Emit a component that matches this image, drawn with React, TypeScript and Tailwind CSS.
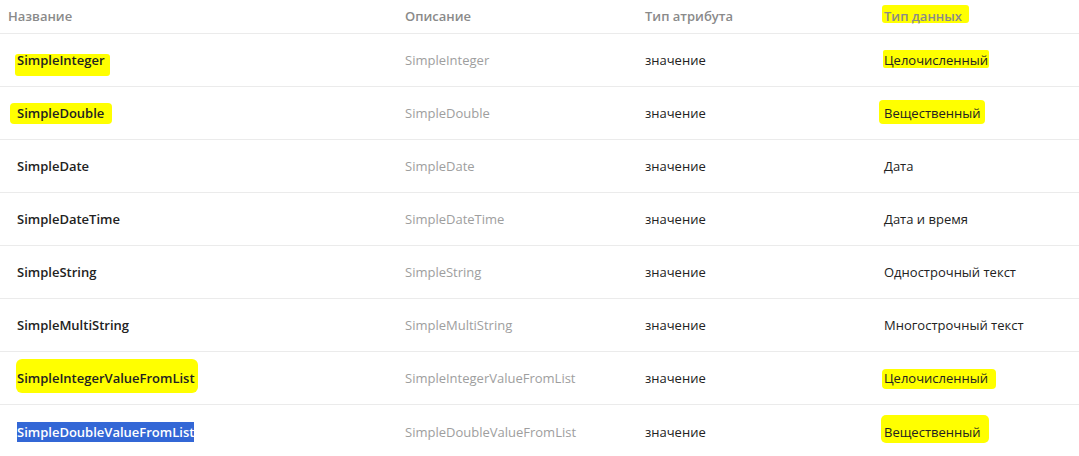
import React from 'react';

type Row = {
  name: string;
  desc: string;
  kind: string;
  type: string;
  nameMark?: string;
  typeMark?: string;
  selected?: boolean;
};

const rows: Row[] = [
  { name: 'SimpleInteger', desc: 'SimpleInteger', kind: 'значение', type: 'Целочисленный', nameMark: '-left-[2px] -right-[5px] top-[3px] -bottom-[5px] rounded-[3px]', typeMark: '-left-[1px] -right-[1px] -top-[1px] bottom-[3px] rounded-[2px]' },
  { name: 'SimpleDouble', desc: 'SimpleDouble', kind: 'значение', type: 'Вещественный', nameMark: '-left-[7px] -right-[8px] -top-[1px] bottom-0 rounded-[4px]', typeMark: '-left-[5px] -right-[5px] -top-[4px] bottom-0 rounded-[4px]' },
  { name: 'SimpleDate', desc: 'SimpleDate', kind: 'значение', type: 'Дата' },
  { name: 'SimpleDateTime', desc: 'SimpleDateTime', kind: 'значение', type: 'Дата и время' },
  { name: 'SimpleString', desc: 'SimpleString', kind: 'значение', type: 'Однострочный текст' },
  { name: 'SimpleMultiString', desc: 'SimpleMultiString', kind: 'значение', type: 'Многострочный текст' },
  { name: 'SimpleIntegerValueFromList', desc: 'SimpleIntegerValueFromList', kind: 'значение', type: 'Целочисленный', nameMark: '-left-[1px] -right-[3px] -top-[10px] -bottom-[4px] rounded-[6px]', typeMark: '-left-[2px] -right-[8px] top-0 bottom-0 rounded-[4px]' },
  { name: 'SimpleDoubleValueFromList', desc: 'SimpleDoubleValueFromList', kind: 'значение', type: 'Вещественный', selected: true, typeMark: '-left-[3px] -right-[9px] -top-[8px] -bottom-[1px] rounded-[5px]' },
];

const Mark: React.FC<{ cls?: string; children: React.ReactNode }> = ({ cls, children }) => {
  if (!cls) return <>{children}</>;
  return (
    <span className="relative inline-block">
      <span className={`absolute bg-[#ffff00] ${cls}`} />
      <span className="relative">{children}</span>
    </span>
  );
};

export default function App() {
  return (
    <div
      className="w-[1079px] h-[456px] overflow-hidden bg-white text-[13px]"
      style={{ fontFamily: '"Open Sans", "Noto Sans", sans-serif' }}
    >
      {/* header */}
      <div className="grid grid-cols-[397px_240px_239px_1fr] h-[34px] items-center border-b border-[#ebebeb] font-semibold text-[#8a8a8a]">
        <div className="pl-2">Название</div>
        <div className="pl-2">Описание</div>
        <div className="pl-2">Тип атрибута</div>
        <div className="pl-2">
          <Mark cls="-left-[2px] -right-[7px] -top-[2px] bottom-[3px] rounded-[3px]">Тип данных</Mark>
        </div>
      </div>

      {rows.map((r, i) => (
        <div
          key={r.name}
          className={`grid grid-cols-[397px_240px_239px_1fr] h-[53px] pt-[2px] items-center ${
            i < rows.length - 1 ? 'border-b border-[#ebebeb]' : ''
          }`}
        >
          <div className="pl-[17px] font-semibold text-[#222]">
            {r.selected ? (
              <span className="bg-[#3367d6] text-white py-[1px]">{r.name}</span>
            ) : (
              <Mark cls={r.nameMark}>{r.name}</Mark>
            )}
          </div>
          <div className="pl-2 text-[#9e9e9e]">{r.desc}</div>
          <div className="pl-2 text-[#222]">{r.kind}</div>
          <div className="pl-2 text-[#222]">
            <Mark cls={r.typeMark}>{r.type}</Mark>
          </div>
        </div>
      ))}
    </div>
  );
}
